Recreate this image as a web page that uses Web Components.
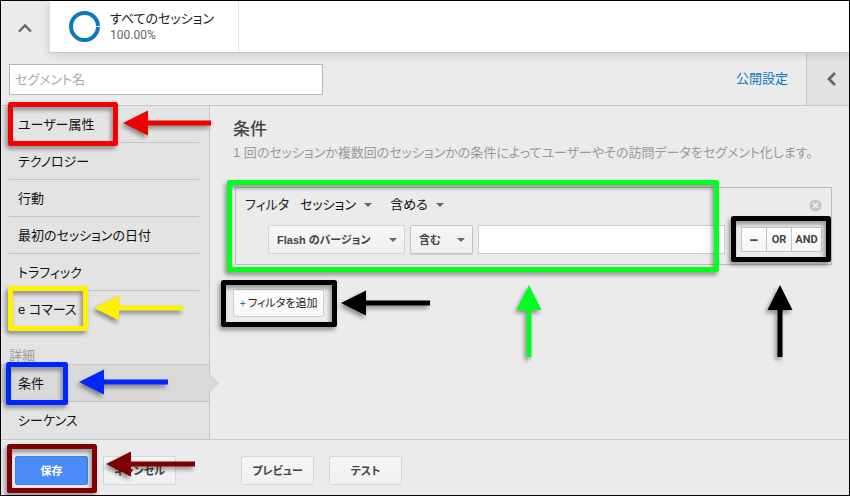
<!DOCTYPE html>
<html lang="ja">
<head>
<meta charset="utf-8">
<title>セグメント</title>
<style>
  body {
    margin: 0;
    font: 13px/20px "Liberation Sans", "Noto Sans CJK JP", sans-serif;
    font-feature-settings: "palt";
    color: #222;
  }
</style>
</head>
<body>
<segment-editor></segment-editor>

<template id="segment-editor">
  <style>
    :host {
      display: flex;
      flex-direction: column;
      position: relative;
      box-sizing: border-box;
      min-height: 100vh;
      border: 1px solid #000;
      background: #ebebeb;
      overflow: hidden;
    }
    .columns { display: flex; flex: 1; }
    nav {
      box-sizing: border-box;
      width: 209px;
      flex: none;
      background: #e3e3e3;
      border-right: 1px solid #c8c8c8;
    }
    nav h3 {
      box-sizing: border-box;
      height: 36px;
      margin: 0;
      padding: 18px 0 0 8px;
      font-size: 13px;
      font-weight: normal;
      color: #999;
    }
    main { flex: 1; min-width: 0; padding: 12px 17px 12px 23px; }
    h2 { margin: 0; font-size: 17px; line-height: 24px; font-weight: 500; color: #444; }
    p { margin: 0 0 23px; line-height: 22px; color: #999; white-space: nowrap; }
    footer {
      display: flex;
      gap: 15px;
      padding: 16px 14px 10px;
      border-top: 1px solid #c8c8c8;
    }
    .push { margin-left: 50px; }
    .add { display: inline-block; margin-top: 24px; }
  </style>
  <segment-header name="すべてのセッション" share="100.00%"></segment-header>
  <segment-toolbar></segment-toolbar>
  <div class="columns">
    <nav>
      <side-item>ユーザー属性</side-item>
      <side-item>テクノロジー</side-item>
      <side-item>行動</side-item>
      <side-item>最初のセッションの日付</side-item>
      <side-item>トラフィック</side-item>
      <side-item last>e コマース</side-item>
      <h3>詳細</h3>
      <side-item selected>条件</side-item>
      <side-item last>シーケンス</side-item>
    </nav>
    <main>
      <h2>条件</h2>
      <p>1 回のセッションか複数回のセッションかの条件によってユーザーやその訪問データをセグメント化します。</p>
      <filter-box></filter-box>
      <push-button class="add" kind="add"><span slot="icon">+</span>フィルタを追加</push-button>
    </main>
  </div>
  <footer>
    <push-button kind="primary">保存</push-button>
    <push-button>キャンセル</push-button>
    <push-button class="push">プレビュー</push-button>
    <push-button>テスト</push-button>
  </footer>
  <callout-layer></callout-layer>
</template>

<template id="segment-header">
  <style>
    :host { display: flex; height: 52px; position: relative; }
    .toggle {
      width: 48px;
      padding: 0;
      border: 0;
      background: #ebebeb;
    }
    .toggle svg { display: block; margin: 1px auto 0; }
    .tabs {
      flex: 1;
      display: flex;
      background: #fff;
      border-left: 1px solid #ddd;
      border-bottom: 1px solid #c8c8c8;
      box-shadow: 0 2px 8px rgba(0, 0, 0, .12);
    }
    .tab {
      display: flex;
      align-items: center;
      gap: 9px;
      box-sizing: border-box;
      width: 189px;
      padding-left: 18px;
      border-right: 1px solid #e5e5e5;
    }
    .tab svg { flex: none; }
    .name { color: #222; line-height: 16px; }
    .share { font: 12px/16px Roboto, sans-serif; color: #666; }
  </style>
  <button class="toggle" aria-label="閉じる">
    <svg width="14" height="10" viewBox="0 0 14 10"><path d="M1 8.500 7 2.500 13 8.500" fill="none" stroke="#6b6464" stroke-width="2.400"/></svg>
  </button>
  <div class="tabs">
    <div class="tab">
      <svg width="33" height="33" viewBox="0 0 33 33">
        <circle cx="16.500" cy="16.500" r="13.500" fill="none" stroke="#0a7abf" stroke-width="4"/>
        <path d="M28 16.500h5" stroke="#fff"/>
      </svg>
      <div>
        <div class="name"></div>
        <div class="share"></div>
      </div>
    </div>
  </div>
</template>

<template id="segment-toolbar">
  <style>
    :host {
      display: flex;
      align-items: center;
      box-sizing: border-box;
      height: 53px;
      padding-left: 8px;
      border-bottom: 1px solid #c8c8c8;
    }
    input {
      box-sizing: border-box;
      width: 314px;
      height: 31px;
      padding: 0 5px;
      border: 1px solid #b5b5b5;
      background: #fff;
      font: inherit;
      font-feature-settings: inherit;
    }
    input::placeholder { color: #aaa; opacity: 1; }
    a { margin-left: auto; color: #0a7abf; text-decoration: none; }
    button {
      align-self: stretch;
      width: 43px;
      margin-left: 18px;
      padding: 0 0 0 8px;
      border: 0;
      border-left: 1px solid #c8c8c8;
      background: #e2e2e2;
    }
    svg { display: block; margin: 0 auto; }
  </style>
  <input type="text" placeholder="セグメント名" aria-label="セグメント名">
  <a href="#">公開設定</a>
  <button aria-label="開く">
    <svg width="10" height="14" viewBox="0 0 10 14"><path d="M8 1 2 7 8 13" fill="none" stroke="#6b6464" stroke-width="2.800"/></svg>
  </button>
</template>

<template id="side-item">
  <style>
    :host {
      display: block;
      position: relative;
      box-sizing: border-box;
      height: 37px;
      margin: 0 10px 0 8px;
      border-bottom: 1px solid #c4c4c4;
    }
    :host([last]) { border-bottom: 0; }
    :host([selected]) {
      height: 38px;
      margin: 0;
      padding-left: 8px;
      border-top: 1px solid #c8c8c8;
      background: #d9d9d9;
    }
    a {
      display: block;
      padding-left: 9px;
      line-height: 37px;
      color: #111;
      text-decoration: none;
    }
    svg { display: none; }
    :host([selected]) svg { display: block; position: absolute; left: 100%; top: 8px; }
  </style>
  <a href="#"><slot></slot></a>
  <svg width="10" height="20" viewBox="0 0 10 20"><path d="M0 0.500 9 10 0 19.500" fill="#d9d9d9" stroke="#c8c8c8"/></svg>
</template>

<template id="drop-down">
  <style>
    :host { display: inline-block; position: relative; }
    select {
      appearance: none;
      display: block;
      margin: 0;
      padding: 0 24px 0 0;
      border: 0;
      background: none;
      font: inherit;
      font-feature-settings: inherit;
      color: #111;
    }
    svg { position: absolute; right: 8px; top: 50%; margin-top: -2px; pointer-events: none; }
    :host([boxed]) select {
      box-sizing: border-box;
      width: 100%;
      height: 29px;
      padding: 0 20px 0 8px;
      border: 1px solid #d4d4d4;
      border-radius: 2px;
      background: linear-gradient(#f6f6f6, #f0f0f0);
      font-size: 11px;
      font-weight: bold;
      color: #444;
    }
    :host([raised]) select { border-color: #c4c4c4; box-shadow: 0 1px 1px rgba(0, 0, 0, .1); }
  </style>
  <select><option></option></select>
  <svg width="8" height="4" viewBox="0 0 8 4"><path d="M0 0h8L4 4z" fill="#6e6466"/></svg>
</template>

<template id="push-button">
  <style>
    :host { display: block; }
    button {
      box-sizing: border-box;
      min-width: 73px;
      height: 29px;
      padding: 0 8px;
      border: 1px solid #d6d6d6;
      border-radius: 2px;
      background: linear-gradient(#f5f5f5, #f1f1f1);
      font: bold 11px/16px "Liberation Sans", "Noto Sans CJK JP", sans-serif;
      font-feature-settings: inherit;
      color: #444;
    }
    :host([kind="primary"]) button { border-color: #4080ee; background: #4a8bf5; color: #fff; }
    :host([kind="add"]) button {
      height: 28px;
      border-color: #ccc;
      background: linear-gradient(#fff, #f6f6f6);
      font-weight: normal;
      color: #222;
      min-width: 91px;
      padding: 0;
    }
    ::slotted(span) { margin-right: 2px; color: #2a78a8; }
  </style>
  <button><slot name="icon"></slot><slot></slot></button>
</template>

<template id="filter-box">
  <style>
    :host {
      display: block;
      box-sizing: border-box;
      margin-left: 2px;
      padding: 7px 9px 10px;
      border: 1px solid #bdbdbd;
    }
    .head { display: flex; align-items: center; height: 20px; }
    .head drop-down { margin-left: 11px; }
    .head drop-down + drop-down { margin-left: 10px; }
    .close { margin-left: auto; padding: 0; border: 0; background: none; }
    .close svg { display: block; }
    .rule { display: flex; align-items: center; gap: 5px; margin: 10px 0 0 23px; }
    .field { width: 137px; }
    .match { width: 63px; }
    input {
      box-sizing: border-box;
      flex: 1;
      min-width: 0;
      height: 29px;
      border: 1px solid #ccc;
      background: #fff;
    }
    .logic { display: flex; margin-left: 11px; }
    .logic button {
      box-sizing: border-box;
      width: 25px;
      height: 25px;
      padding: 0;
      border: 1px solid #c4c4c4;
      border-right-width: 0;
      background: linear-gradient(#fff, #f3f3f3);
      font: bold 11px/16px Roboto, sans-serif;
      color: #444;
    }
    .logic button:last-child { width: 31px; border-right-width: 1px; }
    .logic button:first-child { font: bold 15px/16px "Liberation Sans", sans-serif; }
  </style>
  <div class="head">
    <span>フィルタ</span>
    <drop-down label="対象" value="セッション"></drop-down>
    <drop-down label="条件" value="含める"></drop-down>
    <button class="close" aria-label="削除">
      <svg width="13" height="13" viewBox="0 0 13 13">
        <circle cx="6.500" cy="6.500" r="6" fill="#c6c6c6"/>
        <path d="M4 4l5 5M9 4 4 9" stroke="#f2f2f2" stroke-width="1.500"/>
      </svg>
    </button>
  </div>
  <div class="rule">
    <drop-down class="field" boxed label="項目" value="Flash のバージョン"></drop-down>
    <drop-down class="match" boxed raised label="一致" value="含む"></drop-down>
    <input type="text" aria-label="値">
    <div class="logic">
      <button>−</button><button>OR</button><button>AND</button>
    </div>
  </div>
</template>

<template id="callout-layer">
  <style>
    :host { position: absolute; left: -1px; top: -1px; pointer-events: none; }
    svg { display: block; filter: drop-shadow(-2px 3px 2px rgba(0, 0, 0, .4)); }
    rect { fill: none; stroke-width: 5; stroke-linejoin: round; }
  </style>
  <svg width="850" height="496" viewBox="0 0 850 496" aria-hidden="true"></svg>
</template>

<script>
// attach an open shadow root filled from the template with the tag's name
class BaseElement extends HTMLElement {
  constructor() {
    super();
    const template = document.getElementById(this.localName);
    this.attachShadow({ mode: 'open' }).appendChild(template.content.cloneNode(true));
  }

  $(selector) {
    return this.shadowRoot.querySelector(selector);
  }
}

class SegmentHeader extends BaseElement {
  connectedCallback() {
    this.$('.name').textContent = this.getAttribute('name');
    this.$('.share').textContent = this.getAttribute('share');
  }
}

class DropDown extends BaseElement {
  connectedCallback() {
    this.$('select').setAttribute('aria-label', this.getAttribute('label'));
    this.$('option').textContent = this.getAttribute('value');
  }
}

// frames: colour, x, y, width, height (outer edge)
const FRAMES = [
  ['#f00000', 8, 102, 110, 44],
  ['#fff200', 8, 286, 80, 45],
  ['#0026ff', 6, 362, 62, 43],
  ['#7f0000', 7, 444, 90, 49],
  ['#00ff21', 227, 180, 492, 92],
  ['#000', 221, 280, 116, 47],
  ['#000', 731, 216, 100, 46],
];

// arrows: colour, tip x, tip y, length, direction
const ARROWS = [
  ['#f00000', 123, 123, 88, 'left'],
  ['#fff200', 94, 308, 89, 'left'],
  ['#0026ff', 79, 382, 89, 'left'],
  ['#7f0000', 106, 464, 89, 'left'],
  ['#000', 341, 303, 89, 'left'],
  ['#00ff21', 529, 285, 72, 'up'],
  ['#000', 780, 285, 72, 'up'],
];

class CalloutLayer extends BaseElement {
  connectedCallback() {
    const frames = FRAMES.map(([color, x, y, w, h]) =>
      `<rect x="${x + 2.5}" y="${y + 2.5}" width="${w - 5}" height="${h - 5}" stroke="${color}"/>`);
    const arrows = ARROWS.map(([color, x, y, length, direction]) => {
      const turn = direction === 'up' ? 90 : 0;
      return `<path transform="translate(${x} ${y}) rotate(${turn})" fill="${color}"
        d="M0 0 25-12.500V-2.500H${length}V2.500H25V12.500z"/>`;
    });
    this.$('svg').innerHTML = frames.concat(arrows).join('');
  }
}

customElements.define('side-item', class extends BaseElement {});
customElements.define('push-button', class extends BaseElement {});
customElements.define('drop-down', DropDown);
customElements.define('segment-header', SegmentHeader);
customElements.define('segment-toolbar', class extends BaseElement {});
customElements.define('filter-box', class extends BaseElement {});
customElements.define('callout-layer', CalloutLayer);
customElements.define('segment-editor', class extends BaseElement {});
</script>
</body>
</html>
